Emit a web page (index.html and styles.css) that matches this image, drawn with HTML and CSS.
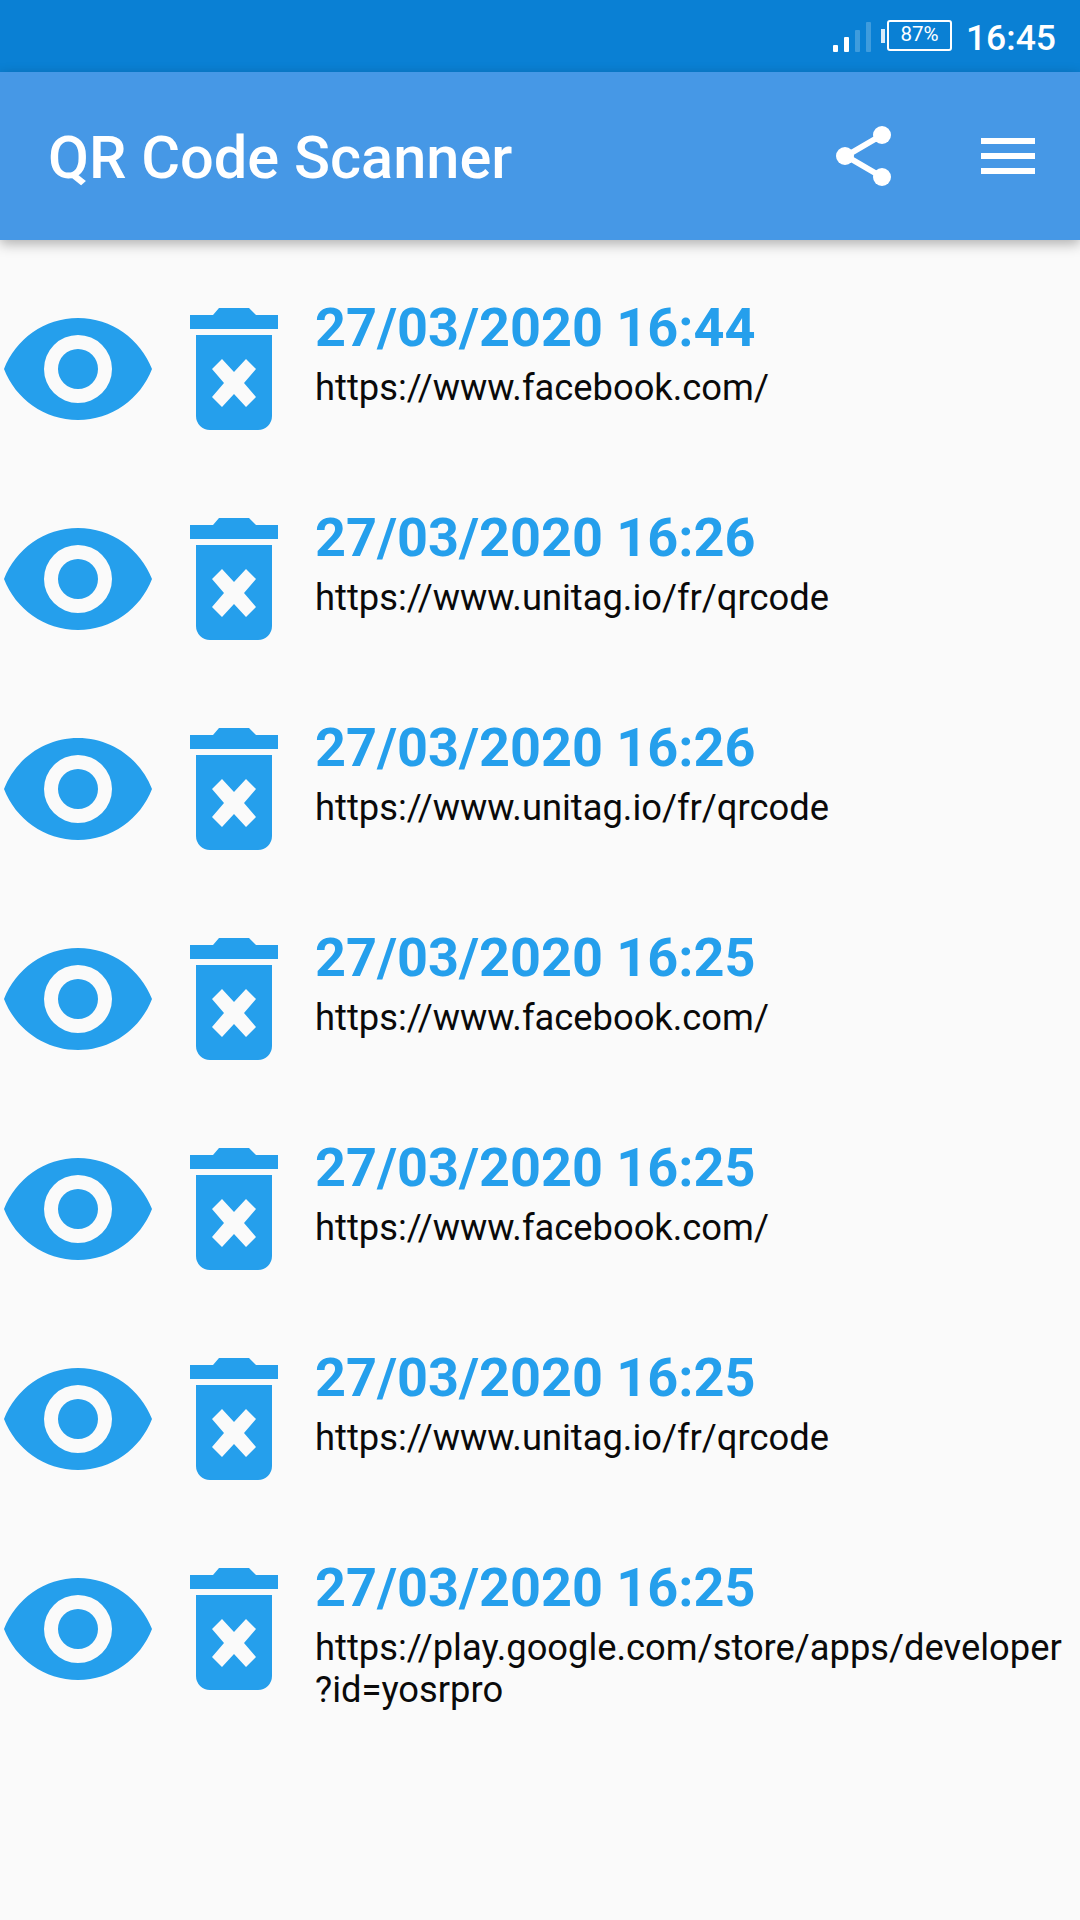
FILE: index.html
```html
<!DOCTYPE html>
<html lang="en">
<head>
<meta charset="utf-8">
<title>QR Code Scanner</title>
<link rel="stylesheet" href="styles.css">
</head>
<body>
<svg class="defs" width="0" height="0" aria-hidden="true">
  <symbol id="eye" viewBox="0 0 148 102">
    <path fill-rule="evenodd" d="M0 51C11.6 21 40.4 0 74 0s62.400 21 74 51c-11.600 30-40.400 51-74 51S11.600 81 0 51ZM74 17a34 34 0 1 0 0 68a34 34 0 1 0 0-68ZM74 31a20 20 0 1 1 0 40a20 20 0 1 1 0-40Z"/>
  </symbol>
  <symbol id="trash" viewBox="0 0 88 122">
    <path d="M0 7H23L29 0H59L66 7H88V21H0Z"/>
    <path fill-rule="evenodd" d="M6 27H82V108a14 14 0 0 1-14 14H20a14 14 0 0 1-14-14ZM32 51L22 61L34 75L22 89L32 99L44 86L56 99L66 89L54 75L66 61L56 51L44 64Z"/>
  </symbol>
</svg>

<header class="status">
  <svg class="signal" viewBox="0 0 38 30" aria-hidden="true">
    <rect class="on" x="0" y="23" width="5" height="7" rx="1"/>
    <rect class="on" x="11" y="15" width="5" height="15" rx="1"/>
    <rect class="off" x="22" y="8" width="5" height="22" rx="1"/>
    <rect class="off" x="33" y="0" width="5" height="30" rx="1"/>
  </svg>
  <div class="battery">
    <span class="nub"></span>
    <span class="case">87%</span>
  </div>
  <span class="clock">16:45</span>
</header>

<nav class="toolbar">
  <h1 class="title">QR Code Scanner</h1>
  <svg class="share" viewBox="0 0 56 60" aria-hidden="true">
    <path class="share-line" d="M10 30L46 9M10 30L46 51"/>
    <circle cx="46" cy="9" r="9"/>
    <circle cx="9" cy="30" r="9"/>
    <circle cx="46" cy="51" r="9"/>
  </svg>
  <div class="menu" aria-hidden="true"><span></span><span></span><span></span></div>
</nav>

<main class="list">
  <article class="row">
    <svg class="eye"><use href="#eye"/></svg>
    <svg class="trash"><use href="#trash"/></svg>
    <div class="text"><div class="date">27/03/2020 16:44</div><div class="url">https://www.facebook.com/</div></div>
  </article>
  <article class="row">
    <svg class="eye"><use href="#eye"/></svg>
    <svg class="trash"><use href="#trash"/></svg>
    <div class="text"><div class="date">27/03/2020 16:26</div><div class="url">https://www.unitag.io/fr/qrcode</div></div>
  </article>
  <article class="row">
    <svg class="eye"><use href="#eye"/></svg>
    <svg class="trash"><use href="#trash"/></svg>
    <div class="text"><div class="date">27/03/2020 16:26</div><div class="url">https://www.unitag.io/fr/qrcode</div></div>
  </article>
  <article class="row">
    <svg class="eye"><use href="#eye"/></svg>
    <svg class="trash"><use href="#trash"/></svg>
    <div class="text"><div class="date">27/03/2020 16:25</div><div class="url">https://www.facebook.com/</div></div>
  </article>
  <article class="row">
    <svg class="eye"><use href="#eye"/></svg>
    <svg class="trash"><use href="#trash"/></svg>
    <div class="text"><div class="date">27/03/2020 16:25</div><div class="url">https://www.facebook.com/</div></div>
  </article>
  <article class="row">
    <svg class="eye"><use href="#eye"/></svg>
    <svg class="trash"><use href="#trash"/></svg>
    <div class="text"><div class="date">27/03/2020 16:25</div><div class="url">https://www.unitag.io/fr/qrcode</div></div>
  </article>
  <article class="row">
    <svg class="eye"><use href="#eye"/></svg>
    <svg class="trash"><use href="#trash"/></svg>
    <div class="text"><div class="date">27/03/2020 16:25</div><div class="url">https://play.google.com/store/apps/developer<br>?id=yosrpro</div></div>
  </article>
</main>
</body>
</html>
```
FILE: styles.css
```css
* { box-sizing: border-box; }
html, body { margin: 0; height: 1920px; overflow: hidden; }
body { background: #fafafa; font-family: Roboto, "Noto Sans", sans-serif; }
.defs { display: block; height: 0; }

.status {
  height: 72px;
  background: #0a80d4;
  display: flex;
  align-items: center;
  justify-content: flex-end;
  padding-right: 24px;
  color: #fff;
}
.signal { width: 38px; height: 30px; margin-right: 10px; margin-top: 2px; }
.signal .on { fill: #fff; }
.signal .off { fill: #fff; opacity: .22; }
.battery { display: flex; align-items: center; margin-right: 14px; margin-top: -1px; }
.nub { width: 4px; height: 14px; background: #fff; opacity: .85; margin-right: 2px; }
.case {
  width: 65px; height: 31px;
  border: 2.5px solid #fff;
  border-radius: 3px;
  font-size: 20.5px;
  line-height: 25px;
  text-align: center;
}
.clock { font-size: 35.5px; font-weight: 500; line-height: 42px; margin-top: 3px; }

.toolbar {
  height: 168px;
  background: #4698e6;
  display: flex;
  align-items: center;
  padding: 0 45px 0 48px;
  box-shadow: 0 4px 12px rgba(0,0,0,.3);
  position: relative;
}
.title { flex: 1; margin: 4px 0 0; color: #fff; font-size: 59.5px; font-weight: 500; line-height: 70px; }
.share { width: 56px; height: 60px; margin-right: 89px; fill: #fff; }
.share-line { stroke: #fff; stroke-width: 6; fill: none; }
.menu { width: 54px; display: flex; flex-direction: column; gap: 9px; }
.menu span { height: 6px; background: #fff; }

.list { display: flex; flex-direction: column; padding-top: 59px; }
.row { display: flex; height: 210px; align-items: flex-start; }
.eye { width: 148px; height: 102px; margin: 19px 0 0 4px; fill: #259fec; flex: none; }
.trash { width: 88px; height: 122px; margin: 9px 0 0 38px; fill: #259fec; flex: none; }
.text { margin-left: 37px; }
.date { color: #259fec; font-size: 54px; font-weight: 700; line-height: 64px; margin-top: -3px; }
.url { color: #0a0a0a; font-size: 36.32px; line-height: 42px; margin-top: 7px; white-space: nowrap; }
```
